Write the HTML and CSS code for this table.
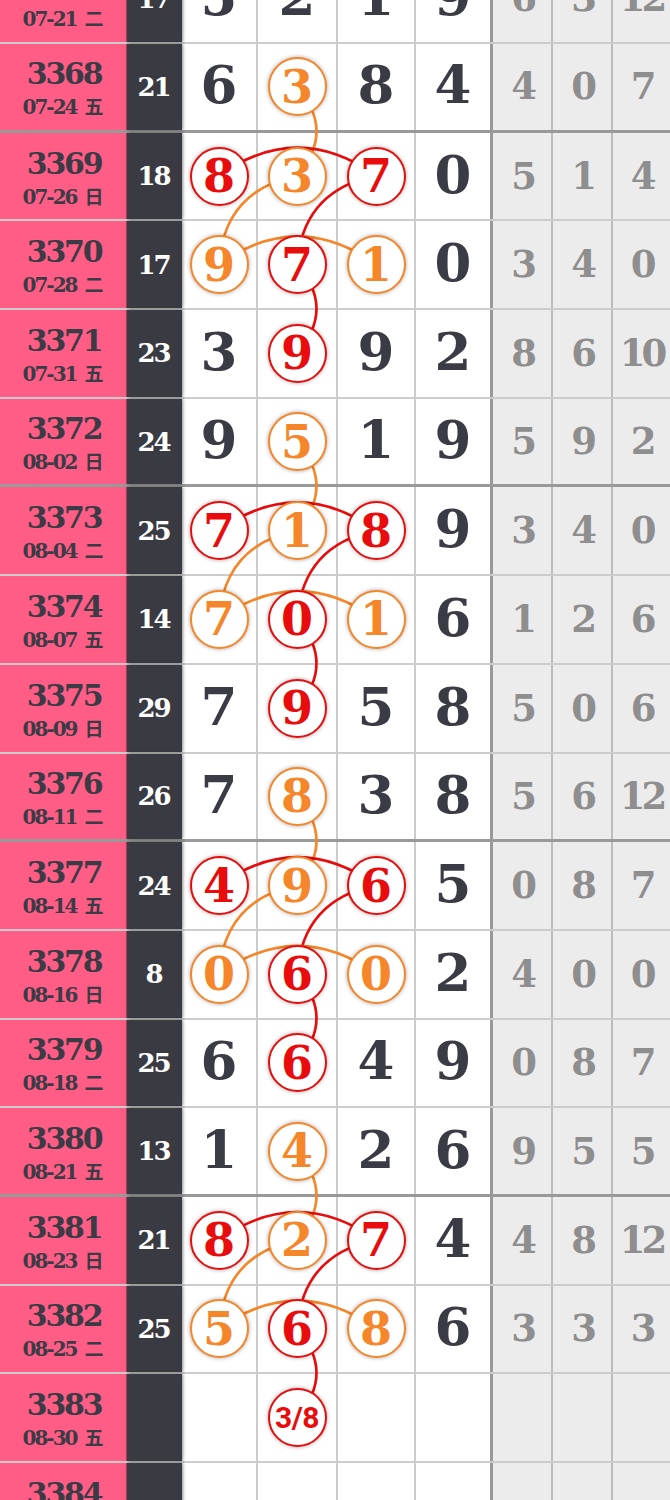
FILE: index.html
```html
<!DOCTYPE html>
<html lang="zh">
<head>
<meta charset="utf-8">
<title>走势图</title>
<link rel="stylesheet" href="styles.css">
</head>
<body>
<div class="chart">
  <svg class="links" width="670" height="1597" viewBox="0 0 670 1597">
    <g fill="none" stroke-width="2.6">
      <path class="lo" d="M297 132 Q336 176.3 297 220.7"/>
      <path class="lr" d="M219 220.7 Q297.5 164.7 376 220.7"/>
      <path class="lo" d="M219 309.4 Q224.3 235.35 297 220.7"/>
      <path class="lr" d="M297 309.4 Q302.8 235.05 376 220.7"/>
      <path class="lo" d="M219 309.4 Q297.5 253.4 376 309.4"/>
      <path class="lr" d="M297 309.4 Q336 353.75 297 398.1"/>

      <path class="lo" d="M297 486.75 Q336 531.1 297 575.44"/>
      <path class="lr" d="M219 575.44 Q297.5 519.44 376 575.44"/>
      <path class="lo" d="M219 664.13 Q224.3 590.1 297 575.44"/>
      <path class="lr" d="M297 664.13 Q302.8 589.8 376 575.44"/>
      <path class="lo" d="M219 664.13 Q297.5 608.13 376 664.13"/>
      <path class="lr" d="M297 664.13 Q336 708.48 297 752.82"/>

      <path class="lo" d="M297 841.51 Q336 885.86 297 930.2"/>
      <path class="lr" d="M219 930.2 Q297.5 874.2 376 930.2"/>
      <path class="lo" d="M219 1018.89 Q224.3 944.85 297 930.2"/>
      <path class="lr" d="M297 1018.89 Q302.8 944.55 376 930.2"/>
      <path class="lo" d="M219 1018.89 Q297.5 962.89 376 1018.89"/>
      <path class="lr" d="M297 1018.89 Q336 1063.24 297 1107.58"/>

      <path class="lo" d="M297 1196.27 Q336 1240.6 297 1284.96"/>
      <path class="lr" d="M219 1284.96 Q297.5 1228.96 376 1284.96"/>
      <path class="lo" d="M219 1373.65 Q224.3 1299.6 297 1284.96"/>
      <path class="lr" d="M297 1373.65 Q302.8 1299.3 376 1284.96"/>
      <path class="lo" d="M219 1373.65 Q297.5 1317.65 376 1373.65"/>
      <path class="lr" d="M297 1373.65 Q336 1418 297 1462.34"/>
    </g>
  </svg>

  <div class="row">
    <div class="issue"><span class="num">3367</span><span class="date">07-21 <i>二</i></span></div>
    <div class="sum">17</div>
    <div class="d">5</div><div class="d">2</div><div class="d">1</div><div class="d last">9</div>
    <div class="g">6</div><div class="g">3</div><div class="g end">12</div>
  </div>
  <div class="row thick">
    <div class="issue"><span class="num">3368</span><span class="date">07-24 <i>五</i></span></div>
    <div class="sum">21</div>
    <div class="d">6</div><div class="d"><span class="ball o">3</span></div><div class="d">8</div><div class="d last">4</div>
    <div class="g">4</div><div class="g">0</div><div class="g end">7</div>
  </div>
  <div class="row">
    <div class="issue"><span class="num">3369</span><span class="date">07-26 <i>日</i></span></div>
    <div class="sum">18</div>
    <div class="d"><span class="ball r">8</span></div><div class="d"><span class="ball o">3</span></div><div class="d"><span class="ball r">7</span></div><div class="d last">0</div>
    <div class="g">5</div><div class="g">1</div><div class="g end">4</div>
  </div>
  <div class="row">
    <div class="issue"><span class="num">3370</span><span class="date">07-28 <i>二</i></span></div>
    <div class="sum">17</div>
    <div class="d"><span class="ball o">9</span></div><div class="d"><span class="ball r">7</span></div><div class="d"><span class="ball o">1</span></div><div class="d last">0</div>
    <div class="g">3</div><div class="g">4</div><div class="g end">0</div>
  </div>
  <div class="row">
    <div class="issue"><span class="num">3371</span><span class="date">07-31 <i>五</i></span></div>
    <div class="sum">23</div>
    <div class="d">3</div><div class="d"><span class="ball r">9</span></div><div class="d">9</div><div class="d last">2</div>
    <div class="g">8</div><div class="g">6</div><div class="g end">10</div>
  </div>
  <div class="row thick">
    <div class="issue"><span class="num">3372</span><span class="date">08-02 <i>日</i></span></div>
    <div class="sum">24</div>
    <div class="d">9</div><div class="d"><span class="ball o">5</span></div><div class="d">1</div><div class="d last">9</div>
    <div class="g">5</div><div class="g">9</div><div class="g end">2</div>
  </div>
  <div class="row">
    <div class="issue"><span class="num">3373</span><span class="date">08-04 <i>二</i></span></div>
    <div class="sum">25</div>
    <div class="d"><span class="ball r">7</span></div><div class="d"><span class="ball o">1</span></div><div class="d"><span class="ball r">8</span></div><div class="d last">9</div>
    <div class="g">3</div><div class="g">4</div><div class="g end">0</div>
  </div>
  <div class="row">
    <div class="issue"><span class="num">3374</span><span class="date">08-07 <i>五</i></span></div>
    <div class="sum">14</div>
    <div class="d"><span class="ball o">7</span></div><div class="d"><span class="ball r">0</span></div><div class="d"><span class="ball o">1</span></div><div class="d last">6</div>
    <div class="g">1</div><div class="g">2</div><div class="g end">6</div>
  </div>
  <div class="row">
    <div class="issue"><span class="num">3375</span><span class="date">08-09 <i>日</i></span></div>
    <div class="sum">29</div>
    <div class="d">7</div><div class="d"><span class="ball r">9</span></div><div class="d">5</div><div class="d last">8</div>
    <div class="g">5</div><div class="g">0</div><div class="g end">6</div>
  </div>
  <div class="row thick">
    <div class="issue"><span class="num">3376</span><span class="date">08-11 <i>二</i></span></div>
    <div class="sum">26</div>
    <div class="d">7</div><div class="d"><span class="ball o">8</span></div><div class="d">3</div><div class="d last">8</div>
    <div class="g">5</div><div class="g">6</div><div class="g end">12</div>
  </div>
  <div class="row">
    <div class="issue"><span class="num">3377</span><span class="date">08-14 <i>五</i></span></div>
    <div class="sum">24</div>
    <div class="d"><span class="ball r">4</span></div><div class="d"><span class="ball o">9</span></div><div class="d"><span class="ball r">6</span></div><div class="d last">5</div>
    <div class="g">0</div><div class="g">8</div><div class="g end">7</div>
  </div>
  <div class="row">
    <div class="issue"><span class="num">3378</span><span class="date">08-16 <i>日</i></span></div>
    <div class="sum">8</div>
    <div class="d"><span class="ball o">0</span></div><div class="d"><span class="ball r">6</span></div><div class="d"><span class="ball o">0</span></div><div class="d last">2</div>
    <div class="g">4</div><div class="g">0</div><div class="g end">0</div>
  </div>
  <div class="row">
    <div class="issue"><span class="num">3379</span><span class="date">08-18 <i>二</i></span></div>
    <div class="sum">25</div>
    <div class="d">6</div><div class="d"><span class="ball r">6</span></div><div class="d">4</div><div class="d last">9</div>
    <div class="g">0</div><div class="g">8</div><div class="g end">7</div>
  </div>
  <div class="row thick">
    <div class="issue"><span class="num">3380</span><span class="date">08-21 <i>五</i></span></div>
    <div class="sum">13</div>
    <div class="d">1</div><div class="d"><span class="ball o">4</span></div><div class="d">2</div><div class="d last">6</div>
    <div class="g">9</div><div class="g">5</div><div class="g end">5</div>
  </div>
  <div class="row">
    <div class="issue"><span class="num">3381</span><span class="date">08-23 <i>日</i></span></div>
    <div class="sum">21</div>
    <div class="d"><span class="ball r">8</span></div><div class="d"><span class="ball o">2</span></div><div class="d"><span class="ball r">7</span></div><div class="d last">4</div>
    <div class="g">4</div><div class="g">8</div><div class="g end">12</div>
  </div>
  <div class="row">
    <div class="issue"><span class="num">3382</span><span class="date">08-25 <i>二</i></span></div>
    <div class="sum">25</div>
    <div class="d"><span class="ball o">5</span></div><div class="d"><span class="ball r">6</span></div><div class="d"><span class="ball o">8</span></div><div class="d last">6</div>
    <div class="g">3</div><div class="g">3</div><div class="g end">3</div>
  </div>
  <div class="row">
    <div class="issue"><span class="num">3383</span><span class="date">08-30 <i>五</i></span></div>
    <div class="sum"></div>
    <div class="d"></div><div class="d"><span class="ball r guess">3/8</span></div><div class="d"></div><div class="d last"></div>
    <div class="g"></div><div class="g"></div><div class="g end"></div>
  </div>
  <div class="row">
    <div class="issue"><span class="num">3384</span><span class="date">&nbsp;</span></div>
    <div class="sum"></div>
    <div class="d"></div><div class="d"></div><div class="d"></div><div class="d last"></div>
    <div class="g"></div><div class="g"></div><div class="g end"></div>
  </div>
</div>
</body>
</html>
```

FILE: styles.css
```css
html, body {
  margin: 0;
  padding: 0;
  background: #ffffff;
}
body {
  width: 670px;
  height: 1500px;
  overflow: hidden;
}
.chart {
  position: relative;
  width: 670px;
  margin-top: -44.7px;
  font-family: "DejaVu Serif", "Noto Sans CJK SC", serif;
  font-weight: bold;
  color: #3b3b45;
}
.links {
  position: absolute;
  left: 0;
  top: 0;
  z-index: 1;
}
.lo { stroke: #f5862a; }
.lr { stroke: #e80c0c; }

.row {
  display: grid;
  grid-template-columns: 127px 55px 76px 80px 78px 77px 60px 60px 57px;
  height: 88.69px;
  box-sizing: border-box;
  border-bottom: 2px solid rgba(0, 0, 0, 0.2);
}
.row.thick {
  border-bottom: 3px solid rgba(0, 0, 0, 0.4);
}

.issue {
  background: #ff5d86;
  border-right: 1px solid rgba(0, 0, 0, 0.3);
  display: flex;
  flex-direction: column;
  align-items: center;
  justify-content: center;
  gap: 7px;
  padding-top: 3px;
  color: #3b3b45;
}
.num {
  font-size: 30px;
  line-height: 1;
  letter-spacing: -2.2px;
  margin-right: -2.2px;
}
.date {
  font-size: 20px;
  line-height: 1;
  letter-spacing: -2px;
  white-space: nowrap;
}
.date i {
  font-style: normal;
  font-family: "Noto Sans CJK SC", sans-serif;
  font-weight: bold;
  font-size: 19px;
  letter-spacing: 0;
  margin-left: 3px;
}

.sum {
  background: #3a3a42;
  color: #ffffff;
  font-size: 26px;
  letter-spacing: -2px;
  display: flex;
  align-items: center;
  justify-content: center;
  padding-right: 2px;
  box-shadow: 1px 0 3px rgba(0, 0, 0, 0.45);
  position: relative;
}

.d {
  border-right: 2px solid rgba(0, 0, 0, 0.2);
  display: flex;
  align-items: center;
  justify-content: center;
  font-size: 53px;
  line-height: 1;
  padding-bottom: 4px;
  box-sizing: border-box;
}
.d.last {
  border-right: 3px solid rgba(0, 0, 0, 0.4);
}

.g {
  background: #ececec;
  border-right: 2px solid rgba(0, 0, 0, 0.2);
  color: #8e8e8e;
  font-size: 37px;
  line-height: 1;
  letter-spacing: -4px;
  display: flex;
  align-items: center;
  justify-content: center;
}
.g.end {
  border-right: none;
}

.ball {
  position: relative;
  z-index: 2;
  box-sizing: border-box;
  width: 59px;
  height: 59px;
  border-radius: 50%;
  border: 2.6px solid;
  background: #ffffff;
  display: flex;
  align-items: center;
  justify-content: center;
  font-size: 46px;
  line-height: 1;
  margin-top: 4px;
  box-shadow: 0 0 4px rgba(0, 0, 0, 0.35);
}
.ball.o {
  color: #f5862a;
  border-color: #f5862a;
}
.ball.r {
  color: #e80c0c;
  border-color: #e80c0c;
}
.ball.guess {
  font-family: "Roboto", "Liberation Sans", sans-serif;
  font-size: 30px;
  letter-spacing: -0.5px;
}
```
